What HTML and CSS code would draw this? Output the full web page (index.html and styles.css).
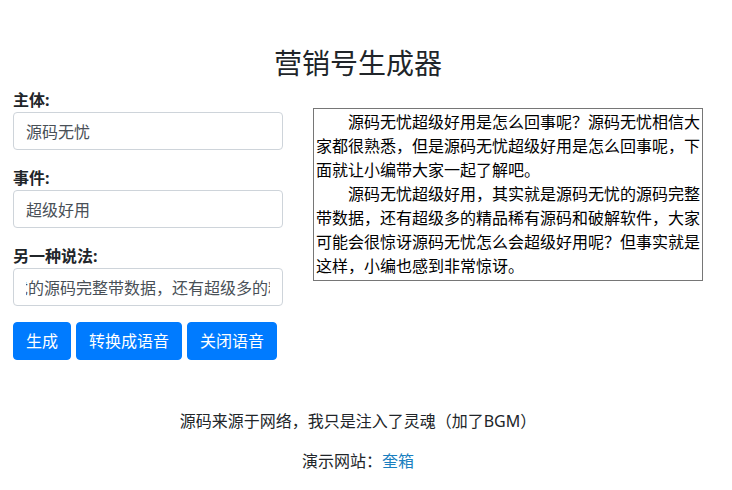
FILE: index.html
```html
<!DOCTYPE html>
<html lang="zh-CN">
<head>
<meta charset="utf-8">
<title>营销号生成器</title>
<link rel="stylesheet" href="styles.css">
</head>
<body>
<div class="page">
  <h1 class="title">营销号生成器</h1>
  <div class="main">
    <div class="form">
      <div class="group">
        <label class="label">主体:</label>
        <input class="input" type="text" value="源码无忧">
      </div>
      <div class="group">
        <label class="label">事件:</label>
        <input class="input" type="text" value="超级好用">
      </div>
      <div class="group">
        <label class="label">另一种说法:</label>
        <input class="input input-scrolled" type="text" value="忧的源码完整带数据，还有超级多的精品稀有源码和破解软件">
      </div>
      <div class="buttons">
        <button class="btn">生成</button>
        <button class="btn">转换成语音</button>
        <button class="btn">关闭语音</button>
      </div>
    </div>
    <div class="result">
      <p class="para">源码无忧超级好用是怎么回事呢？源码无忧相信大家都很熟悉，但是源码无忧超级好用是怎么回事呢，下面就让小编带大家一起了解吧。</p>
      <p class="para">源码无忧超级好用，其实就是源码无忧的源码完整带数据，还有超级多的精品稀有源码和破解软件，大家可能会很惊讶源码无忧怎么会超级好用呢？但事实就是这样，小编也感到非常惊讶。</p>
    </div>
  </div>
  <div class="footer">
    <p class="foot-line">源码来源于网络，我只是注入了灵魂（加了BGM）</p>
    <p class="foot-line">演示网站：<a class="link" href="#">奎箱</a></p>
  </div>
</div>
</body>
</html>
```

FILE: styles.css
```css
html, body {
  margin: 0;
  padding: 0;
  background: #fff;
}
body {
  font-family: "Noto Sans", "Noto Sans CJK SC", sans-serif;
  font-size: 16px;
  line-height: 1.5;
  color: #212529;
}
.page {
  width: 716px;
  box-sizing: border-box;
  padding: 0 13px;
}
.title {
  margin: 47px 0 7px;
  font-size: 28px;
  font-weight: 400;
  line-height: 1.2;
  text-align: center;
}
.main {
  display: flex;
  gap: 30px;
  align-items: flex-start;
}
.form {
  width: 270px;
  display: flex;
  flex-direction: column;
}
.group {
  display: flex;
  flex-direction: column;
  margin-bottom: 16px;
}
.label {
  display: block;
  font-weight: 700;
  line-height: 24px;
  height: 24px;
}
.input {
  box-sizing: border-box;
  width: 100%;
  height: 38px;
  padding: 6px 12px;
  font-family: inherit;
  font-size: 16px;
  line-height: 24px;
  color: #495057;
  background: #fff;
  border: 1px solid #ced4da;
  border-radius: 4px;
  outline: none;
}
.input-scrolled {
  text-indent: -14px;
}
.buttons {
  display: flex;
  gap: 5px;
}
.btn {
  height: 38px;
  padding: 6px 12px;
  font-family: inherit;
  font-size: 16px;
  line-height: 24px;
  color: #fff;
  background: #007bff;
  border: 1px solid #007bff;
  border-radius: 4px;
}
.result {
  box-sizing: border-box;
  width: 390px;
  margin-top: 20px;
  padding: 1px 2px 2px;
  border: 1px solid #767676;
  color: #000;
}
.para {
  margin: 0;
  text-indent: 2em;
  line-height: 24px;
}
.footer {
  margin-top: 49px;
  text-align: center;
}
.foot-line {
  margin: 0 0 16px;
  line-height: 24px;
}
.link {
  color: #1a7fc0;
  text-decoration: none;
}
```
